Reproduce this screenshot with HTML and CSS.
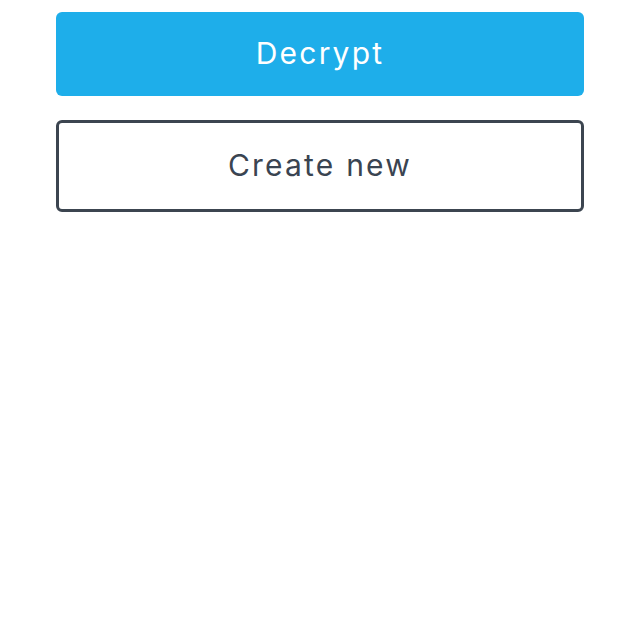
FILE: index.html
```html
<!DOCTYPE html>
<html>
<head>
<meta charset="utf-8">
<link rel="stylesheet" href="styles.css">
</head>
<body>
<div class="actions">
  <button class="btn btn-primary">Decrypt</button>
  <button class="btn btn-outline">Create new</button>
</div>
</body>
</html>
```
FILE: styles.css
```css
html, body { margin: 0; padding: 0; background: #fff; }
.actions {
  display: flex;
  flex-direction: column;
  gap: 24px;
  padding: 12px 56px;
}
.btn {
  font-family: "Inter", "Open Sans", sans-serif;
  font-size: 30px;
  font-weight: 400;
  letter-spacing: 2.2px;
  border-radius: 6px;
  width: 100%;
  cursor: pointer;
  padding: 0 0 2px;
}
.btn-primary {
  height: 84px;
  background: #1eaeea;
  color: #fff;
  border: none;
}
.btn-outline {
  height: 92px;
  background: #fff;
  color: #3a4451;
  border: 3px solid #3c4550;
}
```
